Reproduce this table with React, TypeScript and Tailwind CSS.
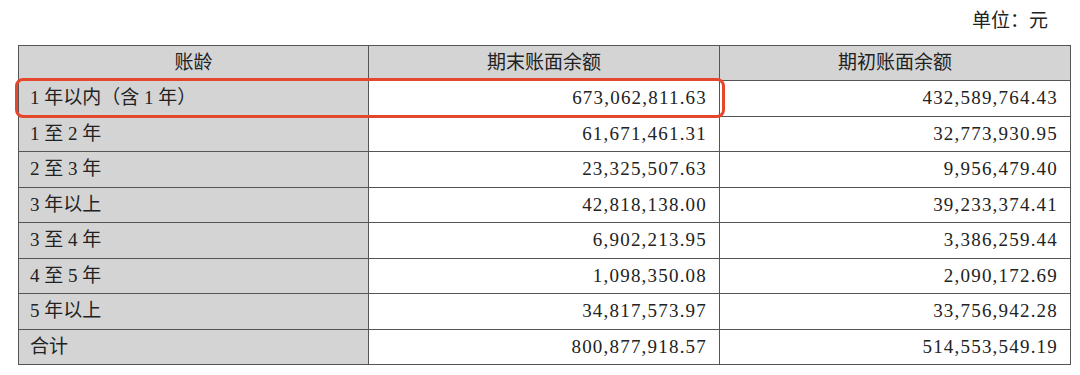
const rows: [string, string, string][] = [
  ["1 年以内（含 1 年）", "673,062,811.63", "432,589,764.43"],
  ["1 至 2 年", "61,671,461.31", "32,773,930.95"],
  ["2 至 3 年", "23,325,507.63", "9,956,479.40"],
  ["3 年以上", "42,818,138.00", "39,233,374.41"],
  ["3 至 4 年", "6,902,213.95", "3,386,259.44"],
  ["4 至 5 年", "1,098,350.08", "2,090,172.69"],
  ["5 年以上", "34,817,573.97", "33,756,942.28"],
  ["合计", "800,877,918.57", "514,553,549.19"],
];

const font = { fontFamily: '"Liberation Serif", "Noto Sans CJK SC", serif' };

export default function App() {
  return (
    <div className="w-[1080px] h-[375px] bg-white text-[#222] pl-[18px] pr-[10px]" style={font}>
      <div className="h-[45px] flex justify-end items-start pt-[7px] pr-[22px] text-[19px]">
        单位：元
      </div>
      <div className="relative w-[1052px]">
        <table className="w-[1052px] border-collapse table-fixed text-[19px]">
          <colgroup>
            <col className="w-[350px]" />
            <col className="w-[351px]" />
            <col className="w-[351px]" />
          </colgroup>
          <thead>
            <tr className="h-[35px] bg-[#d4d4d4]">
              <th className="border-[1.5px] border-[#555] font-normal text-center">账龄</th>
              <th className="border-[1.5px] border-[#555] font-normal text-center">期末账面余额</th>
              <th className="border-[1.5px] border-[#555] font-normal text-center">期初账面余额</th>
            </tr>
          </thead>
          <tbody>
            {rows.map(r => (
              <tr key={r[0]} className="h-[35.5px]">
                <td className="border-[1.5px] border-[#555] bg-[#d4d4d4] pl-[11px]">{r[0]}</td>
                <td className="border-[1.5px] border-[#555] text-right pr-[12px] tracking-[1.2px]">{r[1]}</td>
                <td className="border-[1.5px] border-[#555] text-right pr-[12px] tracking-[1.2px]">{r[2]}</td>
              </tr>
            ))}
          </tbody>
        </table>
        <div className="absolute left-[-3px] top-[33px] w-[710px] h-[40px] border-[3px] border-[#e5472d] rounded-[8px]" />
      </div>
    </div>
  );
}
